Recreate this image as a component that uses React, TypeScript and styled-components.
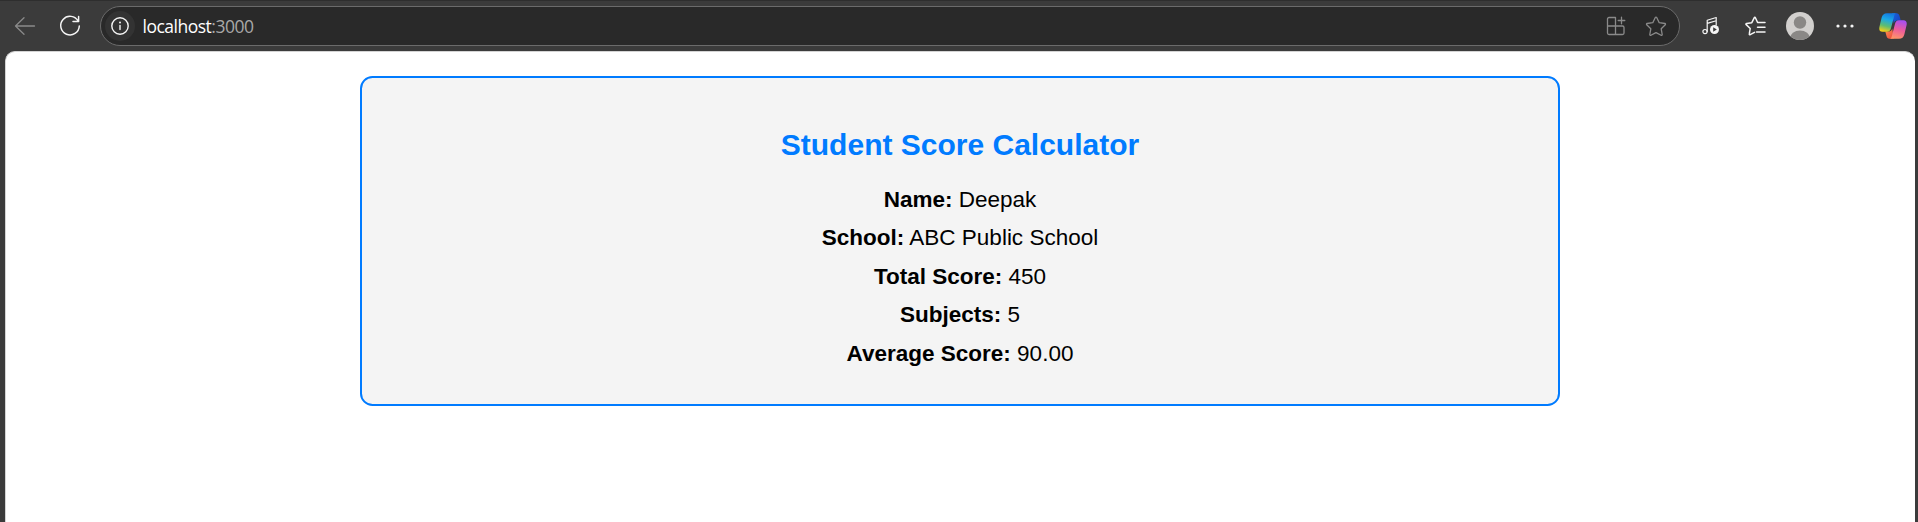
import React from "react";
import styled, { createGlobalStyle } from "styled-components";

const GlobalStyle = createGlobalStyle`
  * { box-sizing: border-box; }
  body { margin: 0; background: #3b3b3b; overflow: hidden; }
`;

const Browser = styled.div`
  display: flex;
  flex-direction: column;
  height: 100vh;
  background: #3b3b3b;
  font-family: "Liberation Sans", Arial, sans-serif;
`;

const Toolbar = styled.header`
  display: flex;
  align-items: center;
  flex: none;
  height: 51px;
  padding: 0 0 0 10px;
  border-top: 1px solid #2e2e2e;
`;

const ToolButton = styled.button<{ $width?: number; $dim?: boolean }>`
  display: flex;
  align-items: center;
  justify-content: center;
  flex: none;
  width: ${(p) => p.$width ?? 45}px;
  height: 38px;
  padding: 0;
  border: 0;
  background: none;
  color: ${(p) => (p.$dim ? "#8a8a8a" : "#f5f5f5")};
`;

const AddressBar = styled.div`
  display: flex;
  align-items: center;
  flex: none;
  width: 1580px;
  height: 40px;
  margin-right: 8px;
  padding: 0 2px 0 4px;
  border: 1px solid #6b6b6b;
  border-radius: 20px;
  background: #292929;
`;

const SiteInfo = styled.span`
  display: flex;
  align-items: center;
  justify-content: center;
  width: 30px;
  height: 30px;
  border-radius: 50%;
  background: #333333;
  color: #f5f5f5;
`;

const Address = styled.span`
  flex: 1;
  padding: 0 0 1px 7.5px;
  font: 17.5px/24px "Open Sans", "Noto Sans", sans-serif;
  letter-spacing: -0.5px;
  color: #ffffff;
`;

const Port = styled.span`
  color: #a8a8a8;
`;

const Page = styled.main`
  flex: 1;
  margin: 0 3px 0 5px;
  padding: 24px 1px 0 0;
  border: solid #d4d4d4;
  border-width: 1px 0 0 1px;
  border-radius: 10px 10px 0 0;
  background: #ffffff;
`;

const Card = styled.section`
  width: 1200px;
  height: 330px;
  margin: 0 auto;
  padding: 25px;
  border: 2px solid #007bff;
  border-radius: 12.5px;
  background: #f4f4f4;
  text-align: center;
`;

const Title = styled.h2`
  margin: 25px 0 24.8px;
  font-size: 30px;
  line-height: 34px;
  color: #007bff;
`;

const Field = styled.p`
  margin: 12.5px 0;
  font-size: 22.5px;
  line-height: 26px;
  color: #000000;
`;

const fields = [
  ["Name", "Deepak"],
  ["School", "ABC Public School"],
  ["Total Score", "450"],
  ["Subjects", "5"],
  ["Average Score", "90.00"],
];

const line = {
  fill: "none",
  stroke: "currentColor",
  strokeWidth: 1.3,
  strokeLinecap: "round" as const,
  strokeLinejoin: "round" as const,
};

const BackIcon = () => (
  <svg width="22" height="20" viewBox="0 0 22 20" {...line}>
    <path d="M20.5 10H1.5M10 1.8 1.5 10l8.5 8.2" />
  </svg>
);

const ReloadIcon = () => (
  <svg width="22" height="22" viewBox="0 0 22 22" {...line} strokeWidth={1.5}>
    <path d="M19.2 6.2A9.3 9.3 0 1 0 20.3 11M19.6 1.6v5h-5.6" />
  </svg>
);

const InfoIcon = () => (
  <svg width="20" height="20" viewBox="0 0 20 20" {...line} strokeWidth={1.4}>
    <circle cx="10" cy="10" r="8.2" />
    <path d="M10 9.4v4.2" />
    <circle cx="10" cy="6.6" r="1" fill="currentColor" stroke="none" />
  </svg>
);

const AppsIcon = () => (
  <svg width="20" height="20" viewBox="0 0 20 20" {...line}>
    <path d="M9.5 1.5H3A1.5 1.5 0 0 0 1.5 3v14A1.5 1.5 0 0 0 3 18.5h13.5a1.5 1.5 0 0 0 1.5-1.5v-5.5a1.5 1.5 0 0 0-1.5-1.5H1.5M9.5 1.5v17M15.5 1.2v6.6M12.2 4.5h6.6" />
  </svg>
);

const StarIcon = () => (
  <svg width="22" height="22" viewBox="0 0 22 22" {...line}>
    <path d="M10.3 2.5a.8.8 0 0 1 1.4 0l2.5 5.2 5.7.8a.8.8 0 0 1 .4 1.3l-4.1 4 1 5.7a.8.8 0 0 1-1.1.8L11 17.6l-5.1 2.7a.8.8 0 0 1-1.1-.8l1-5.7-4.1-4a.8.8 0 0 1 .4-1.3l5.7-.8z" />
  </svg>
);

const MusicIcon = () => (
  <svg width="18" height="20" viewBox="0 0 18 20" {...line} strokeWidth={1.2}>
    <path d="M5.2 15.5V4.2L14.2 1.5v7.5M5.2 7.4l9-2.7" />
    <circle cx="3" cy="15.6" r="2.1" />
    <circle cx="12.5" cy="13.5" r="4.5" fill="currentColor" stroke="none" />
    <path d="M11.2 11.2v4.6l3.6-2.3z" fill="#3b3b3b" stroke="none" />
  </svg>
);

const FavoritesIcon = () => (
  <svg width="22" height="22" viewBox="0 0 22 22" {...line} strokeWidth={1.5}>
    <path d="M10.5 17.3 6.2 19.6a.6.6 0 0 1-.9-.7l.9-5.4-4-3.9a.6.6 0 0 1 .4-1.1L7.8 7.7l2.5-5a.6.6 0 0 1 1.1 0L13.6 7.5M14 7.5h7M13.5 12.2H21M12.5 17H21" />
  </svg>
);

const Avatar = () => (
  <svg width="28" height="28" viewBox="0 0 28 28">
    <clipPath id="avatar-clip"><circle cx="14" cy="14" r="14" /></clipPath>
    <g clipPath="url(#avatar-clip)">
      <rect width="28" height="28" fill="#d2d0ce" />
      <circle cx="14" cy="10.5" r="6.2" fill="#8a8886" />
      <ellipse cx="14" cy="26.5" rx="10" ry="8" fill="#8a8886" />
    </g>
  </svg>
);

const MoreIcon = () => (
  <svg width="18" height="6" viewBox="0 0 18 6" fill="currentColor">
    <circle cx="2" cy="3" r="1.6" />
    <circle cx="9" cy="3" r="1.6" />
    <circle cx="16" cy="3" r="1.6" />
  </svg>
);

const CopilotIcon = () => (
  <svg width="28" height="26" viewBox="0 0 28 26">
    <defs>
      <linearGradient id="cool" x1="0.6" y1="0" x2="0.35" y2="1">
        <stop offset="0" stopColor="#1478e0" />
        <stop offset="0.35" stopColor="#1ba8e6" />
        <stop offset="0.7" stopColor="#5fbd70" />
        <stop offset="1" stopColor="#f5cf18" />
      </linearGradient>
      <linearGradient id="warm" x1="0.6" y1="0" x2="0.35" y2="1">
        <stop offset="0" stopColor="#a64ff0" />
        <stop offset="0.5" stopColor="#ed5c9b" />
        <stop offset="1" stopColor="#ff9567" />
      </linearGradient>
      <linearGradient id="fold" x1="0" y1="0" x2="1" y2="0.6">
        <stop offset="0" stopColor="#1a62dd" />
        <stop offset="1" stopColor="#1746c5" />
      </linearGradient>
      <linearGradient id="ember" x1="0" y1="0" x2="1" y2="1">
        <stop offset="0" stopColor="#ff9650" />
        <stop offset="1" stopColor="#e9413c" />
      </linearGradient>
    </defs>
    <path d="M13 .3h4.500c1.700 0 2.500 1 3 2.700l1.300 4.500h-3.500c-2 0-3 1-3.500 3z" fill="url(#fold)" />
    <path d="M15 25.700h-4.500c-1.700 0-2.500-1-3-2.700l-1.200-4.500h3.400c2 0 3-1 3.500-3z" fill="url(#ember)" />
    <path
      d="M8 .3h9.500c-1.500 0-2 1.300-2.400 3l-3 11.500c-.6 2.600-1.800 4-4.200 4H3.600C.7 18.800-.1 16.800.4 14L2.600 4.800C3.400 1.800 5 .3 8 .3z"
      fill="url(#cool)"
    />
    <path
      d="M20 25.700h-9.500c1.500 0 2-1.300 2.400-3l3-11.500c.6-2.600 1.800-4 4.200-4h4.300c2.900 0 3.700 2 3.200 4.800l-2.200 9.200c-.8 3-2.400 4.500-5.400 4.500z"
      fill="url(#warm)"
    />
  </svg>
);

export default function App() {
  return (
    <Browser>
      <GlobalStyle />
      <Toolbar>
        <ToolButton $width={30} $dim aria-label="Back"><BackIcon /></ToolButton>
        <ToolButton $width={60} aria-label="Refresh"><ReloadIcon /></ToolButton>
        <AddressBar>
          <SiteInfo><InfoIcon /></SiteInfo>
          <Address>localhost<Port>:3000</Port></Address>
          <ToolButton $width={38} $dim aria-label="Apps"><AppsIcon /></ToolButton>
          <ToolButton $width={42} $dim aria-label="Favorite"><StarIcon /></ToolButton>
        </AddressBar>
        <ToolButton aria-label="Media"><MusicIcon /></ToolButton>
        <ToolButton $width={44} aria-label="Favorites"><FavoritesIcon /></ToolButton>
        <ToolButton aria-label="Profile"><Avatar /></ToolButton>
        <ToolButton aria-label="More"><MoreIcon /></ToolButton>
        <ToolButton $width={51} aria-label="Copilot"><CopilotIcon /></ToolButton>
      </Toolbar>
      <Page>
        <Card>
          <Title>Student Score Calculator</Title>
          {fields.map(([label, value]) => (
            <Field key={label}><strong>{label}:</strong> {value}</Field>
          ))}
        </Card>
      </Page>
    </Browser>
  );
}
